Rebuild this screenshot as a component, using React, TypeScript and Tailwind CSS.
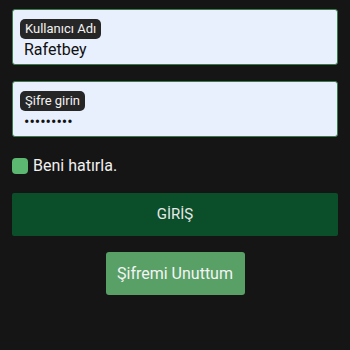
import { useState } from 'react';

function Field({ label, value, type }: { label: string; value: string; type: string }) {
  const [val, setVal] = useState(value);
  return (
    <div className="h-[56px] w-full rounded-[3px] border border-[#3a7a4b] bg-[#e8f0fe] px-[7px] pt-[6px]">
      <span className="inline-block h-[20px] rounded-[5px] bg-[#262626] px-[5px] text-[13px] leading-[20px] text-[#f2f2f2]">
        {label}
      </span>
      <input
        type={type}
        value={val}
        onChange={e => setVal(e.target.value)}
        className="block h-[20px] w-full bg-transparent px-[4px] text-[16px] leading-[20px] text-[#111] outline-none"
      />
    </div>
  );
}

export default function App() {
  const [remember, setRemember] = useState(true);

  return (
    <div
      className="flex h-[350px] w-[350px] flex-col bg-[#151515] px-3 pt-[9px]"
      style={{ fontFamily: 'Roboto, "Noto Sans", sans-serif' }}
    >
      <Field label="Kullanıcı Adı" value="Rafetbey" type="text" />
      <div className="mt-4">
        <Field label="Şifre girin" value="123456789" type="password" />
      </div>

      <label className="mt-[17px] flex h-[24px] items-center gap-[5px] text-[16px] text-[#f0f0f0]">
        <span
          onClick={() => setRemember(!remember)}
          className={remember ? 'h-[16px] w-[16px] rounded-[4px] bg-[#5cb870]' : 'h-[16px] w-[16px] rounded-[4px] border border-[#5cb870]'}
        />
        Beni hatırla.
      </label>

      <button className="mt-[15px] h-[43px] w-full rounded-[2px] bg-[#0b4f2a] text-[15px] text-[#e8e8e8]">
        GİRİŞ
      </button>

      <div className="mt-4 flex justify-center">
        <button className="h-[43px] w-[139px] rounded-[3px] bg-[#58a066] text-[16px] text-[#f4f4f4]">
          Şifremi Unuttum
        </button>
      </div>
    </div>
  );
}
